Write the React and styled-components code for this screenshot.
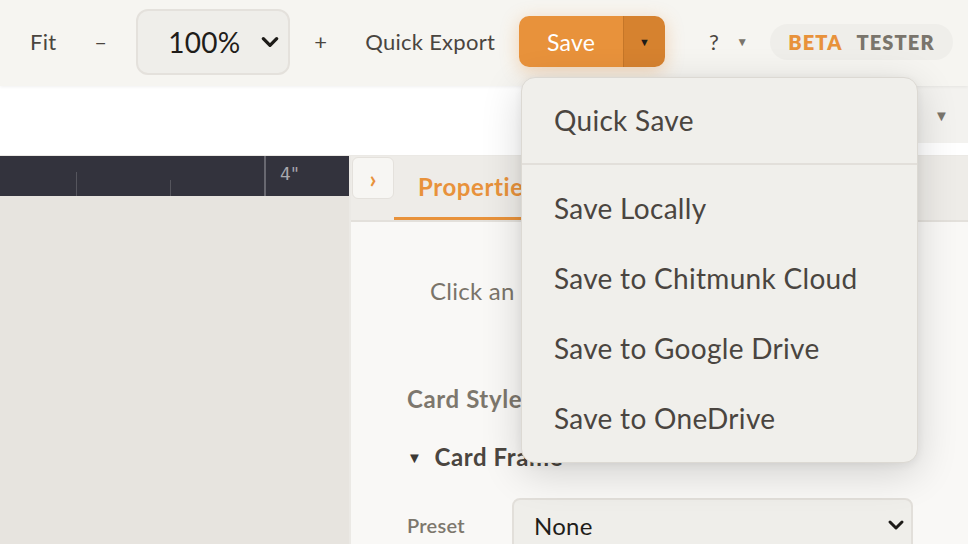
import React from "react";
import styled, { createGlobalStyle } from "styled-components";

const GlobalStyle = createGlobalStyle`
  html, body {
    margin: 0;
    padding: 0;
    background: #f6f5f1;
  }
  * {
    box-sizing: border-box;
  }
`;

const FONT = `"Lato", "Noto Sans", "Open Sans", sans-serif`;
const ORANGE = "#e8923b";

function Chevron({ size = 18 }) {
  return (
    <svg width={size} height={size} viewBox="0 0 24 24" fill="none">
      <path
        d="M4 8l8 8 8-8"
        stroke="#1d1b18"
        strokeWidth="4"
        strokeLinecap="round"
        strokeLinejoin="round"
      />
    </svg>
  );
}

function App() {
  return (
    <Page>
      <GlobalStyle />
      <Toolbar>
        <ToolButton>Fit</ToolButton>
        <ToolButton>–</ToolButton>
        <ZoomSelect>
          <span>100%</span>
          <Chevron size={20} />
        </ZoomSelect>
        <ToolButton>+</ToolButton>
        <ToolButton>Quick Export</ToolButton>
        <SaveGroup>
          <SaveMain>Save</SaveMain>
          <SaveToggle>▼</SaveToggle>
        </SaveGroup>
        <HelpButton>
          ?<SmallCaret>▼</SmallCaret>
        </HelpButton>
        <BetaPill>
          <BetaWord>BETA</BetaWord>
          <TesterWord>TESTER</TesterWord>
        </BetaPill>
      </Toolbar>

      <SubBar>
        <ViewPicker>
          <SmallCaret $big>▼</SmallCaret>
        </ViewPicker>
      </SubBar>

      <Main>
        <CanvasArea>
          <Ruler>
            <Tick style={{ left: 76, top: 16 }} />
            <Tick style={{ left: 170, top: 24 }} />
            <Tick $major style={{ left: 264, top: 0 }} />
            <RulerLabel style={{ left: 280 }}>4"</RulerLabel>
          </Ruler>
          <Canvas />
        </CanvasArea>

        <Panel>
          <TabBar>
            <CollapseButton>›</CollapseButton>
            <Tab $active>Properties</Tab>
          </TabBar>
          <PanelBody>
            <Hint>Click an element to edit it</Hint>
            <SectionTitle>Card Style</SectionTitle>
            <GroupTitle>
              <GroupArrow>▼</GroupArrow>
              Card Frame
            </GroupTitle>
            <FieldRow>
              <FieldLabel>Preset</FieldLabel>
              <FieldSelect>
                <span>None</span>
                <Chevron size={18} />
              </FieldSelect>
            </FieldRow>
          </PanelBody>
        </Panel>
      </Main>

      <SaveMenu>
        <MenuItem>Quick Save</MenuItem>
        <MenuDivider />
        <MenuItem>Save Locally</MenuItem>
        <MenuItem>Save to Chitmunk Cloud</MenuItem>
        <MenuItem>Save to Google Drive</MenuItem>
        <MenuItem>Save to OneDrive</MenuItem>
      </SaveMenu>
    </Page>
  );
}

export default App;

const Page = styled.div`
  position: relative;
  width: 968px;
  height: 544px;
  overflow: hidden;
  display: flex;
  flex-direction: column;
  font-family: ${FONT};
  letter-spacing: 0.25px;
  background: #f6f5f1;
`;

const Toolbar = styled.div`
  height: 86px;
  flex-shrink: 0;
  display: flex;
  align-items: center;
  gap: 6px;
  padding: 0 0 3px 14px;
  background: #f6f5f1;
  box-shadow: 0 1px 3px rgba(0, 0, 0, 0.06);
  position: relative;
  z-index: 2;
`;

const ToolButton = styled.div`
  padding: 0 16px;
  font-size: 22px;
  color: #4a453f;
  line-height: 1;
`;

const ZoomSelect = styled.div`
  margin: 0 2px 0 7px;
  width: 154px;
  height: 66px;
  display: flex;
  align-items: center;
  justify-content: space-between;
  padding: 0 8px 0 30px;
  background: #efeeea;
  border: 2px solid #e4e1dc;
  border-radius: 12px;
  font-size: 28px;
  color: #1f1d1a;
`;

const SaveGroup = styled.div`
  display: flex;
  height: 51px;
  margin-left: 2px;
  border-radius: 10px;
  overflow: hidden;
  box-shadow: 0 4px 18px rgba(232, 146, 59, 0.35);
`;

const SaveMain = styled.div`
  width: 104px;
  display: flex;
  align-items: center;
  justify-content: center;
  background: ${ORANGE};
  color: #fff;
  font-size: 23px;
`;

const SaveToggle = styled.div`
  width: 42px;
  display: flex;
  align-items: center;
  justify-content: center;
  background: #d6822f;
  border-left: 1px solid #c57628;
  color: #1d1b18;
  font-size: 11px;
`;

const HelpButton = styled.div`
  margin-left: 22px;
  padding: 0 16px;
  display: flex;
  align-items: center;
  gap: 17px;
  font-size: 22px;
  color: #4a453f;
`;

const SmallCaret = styled.span`
  font-size: ${(p) => (p.$big ? "15px" : "12px")};
  color: #7a756c;
`;

const BetaPill = styled.div`
  height: 36px;
  display: flex;
  align-items: center;
  gap: 14px;
  padding: 0 18px;
  background: #efeeea;
  border-radius: 18px;
  font-size: 20px;
  font-weight: 800;
  letter-spacing: 1.1px;
`;

const BetaWord = styled.span`
  color: ${ORANGE};
`;

const TesterWord = styled.span`
  color: #7a756c;
`;

const SubBar = styled.div`
  height: 70px;
  flex-shrink: 0;
  background: #ffffff;
  display: flex;
  justify-content: flex-end;
  border-bottom: 1px solid #ebe9e5;
`;

const ViewPicker = styled.div`
  width: 220px;
  height: 57px;
  display: flex;
  align-items: center;
  justify-content: flex-end;
  padding-right: 19px;
  background: #f3f2ef;
`;

const Main = styled.div`
  flex: 1;
  display: flex;
  min-height: 0;
`;

const CanvasArea = styled.div`
  width: 349px;
  flex-shrink: 0;
  display: flex;
  flex-direction: column;
`;

const Ruler = styled.div`
  position: relative;
  height: 40px;
  background: #33333d;
`;

const Tick = styled.div`
  position: absolute;
  bottom: 0;
  width: ${(p) => (p.$major ? "2px" : "1px")};
  background: ${(p) => (p.$major ? "#686870" : "#55555d")};
`;

const RulerLabel = styled.span`
  position: absolute;
  top: 8px;
  font-family: "DejaVu Sans", sans-serif;
  font-size: 17px;
  color: #a9a9ae;
`;

const Canvas = styled.div`
  flex: 1;
  background: #e7e4df;
`;

const Panel = styled.div`
  flex: 1;
  display: flex;
  flex-direction: column;
  background: #f9f8f6;
  border-left: 2px solid #ebe9e5;
`;

const TabBar = styled.div`
  height: 66px;
  flex-shrink: 0;
  display: flex;
  align-items: flex-start;
  padding-top: 1px;
  padding-left: 1px;
  background: #eeece8;
  border-bottom: 2px solid #e3e0db;
`;

const CollapseButton = styled.div`
  width: 42px;
  height: 42px;
  display: flex;
  align-items: center;
  justify-content: center;
  background: #f7f6f3;
  border: 1.5px solid #e4e1dc;
  border-radius: 6px;
  color: ${ORANGE};
  font-size: 24px;
  font-weight: 700;
`;

const Tab = styled.div`
  align-self: stretch;
  display: flex;
  align-items: center;
  padding: 0 24px 2px;
  font-size: 24px;
  font-weight: 700;
  letter-spacing: 0.6px;
  color: ${(p) => (p.$active ? ORANGE : "#7a756c")};
  border-bottom: 3px solid ${(p) => (p.$active ? ORANGE : "transparent")};
`;

const PanelBody = styled.div`
  flex: 1;
  padding: 55px 0 0 56px;
  display: flex;
  flex-direction: column;
`;

const Hint = styled.div`
  padding-left: 23px;
  font-size: 24px;
  color: #7a7469;
  white-space: nowrap;
  line-height: 28px;
`;

const SectionTitle = styled.div`
  margin-top: 80px;
  font-size: 24px;
  font-weight: 700;
  letter-spacing: 0.6px;
  color: #7d776d;
  line-height: 28px;
`;

const GroupTitle = styled.div`
  margin-top: 30px;
  display: flex;
  align-items: center;
  gap: 12px;
  font-size: 24px;
  font-weight: 700;
  letter-spacing: 0.6px;
  color: #4b4640;
  line-height: 28px;
`;

const GroupArrow = styled.span`
  font-size: 15px;
  color: #3d3934;
`;

const FieldRow = styled.div`
  margin-top: 27px;
  display: flex;
  align-items: center;
`;

const FieldLabel = styled.div`
  width: 105px;
  font-size: 20px;
  font-weight: 600;
  color: #7d776d;
`;

const FieldSelect = styled.div`
  width: 401px;
  height: 54px;
  display: flex;
  align-items: center;
  justify-content: space-between;
  padding: 0 6px 0 20px;
  background: #efeeea;
  border: 2px solid #e2dfda;
  border-radius: 8px;
  font-size: 24px;
  color: #1f1d1a;
`;

const SaveMenu = styled.div`
  position: absolute;
  left: 521px;
  top: 77px;
  width: 397px;
  height: 386px;
  padding: 7px 0 8px;
  z-index: 5;
  background: #f0efeb;
  border: 1.5px solid #dcd9d3;
  border-radius: 14px;
  box-shadow: 0 10px 40px rgba(0, 0, 0, 0.16), 0 2px 8px rgba(0, 0, 0, 0.06);
`;

const MenuItem = styled.div`
  height: 70px;
  display: flex;
  align-items: center;
  padding-left: 32px;
  font-size: 28px;
  letter-spacing: 0.3px;
  color: #4a4540;
`;

const MenuDivider = styled.div`
  height: 2px;
  margin: 8px 0;
  background: #e2dfda;
`;
